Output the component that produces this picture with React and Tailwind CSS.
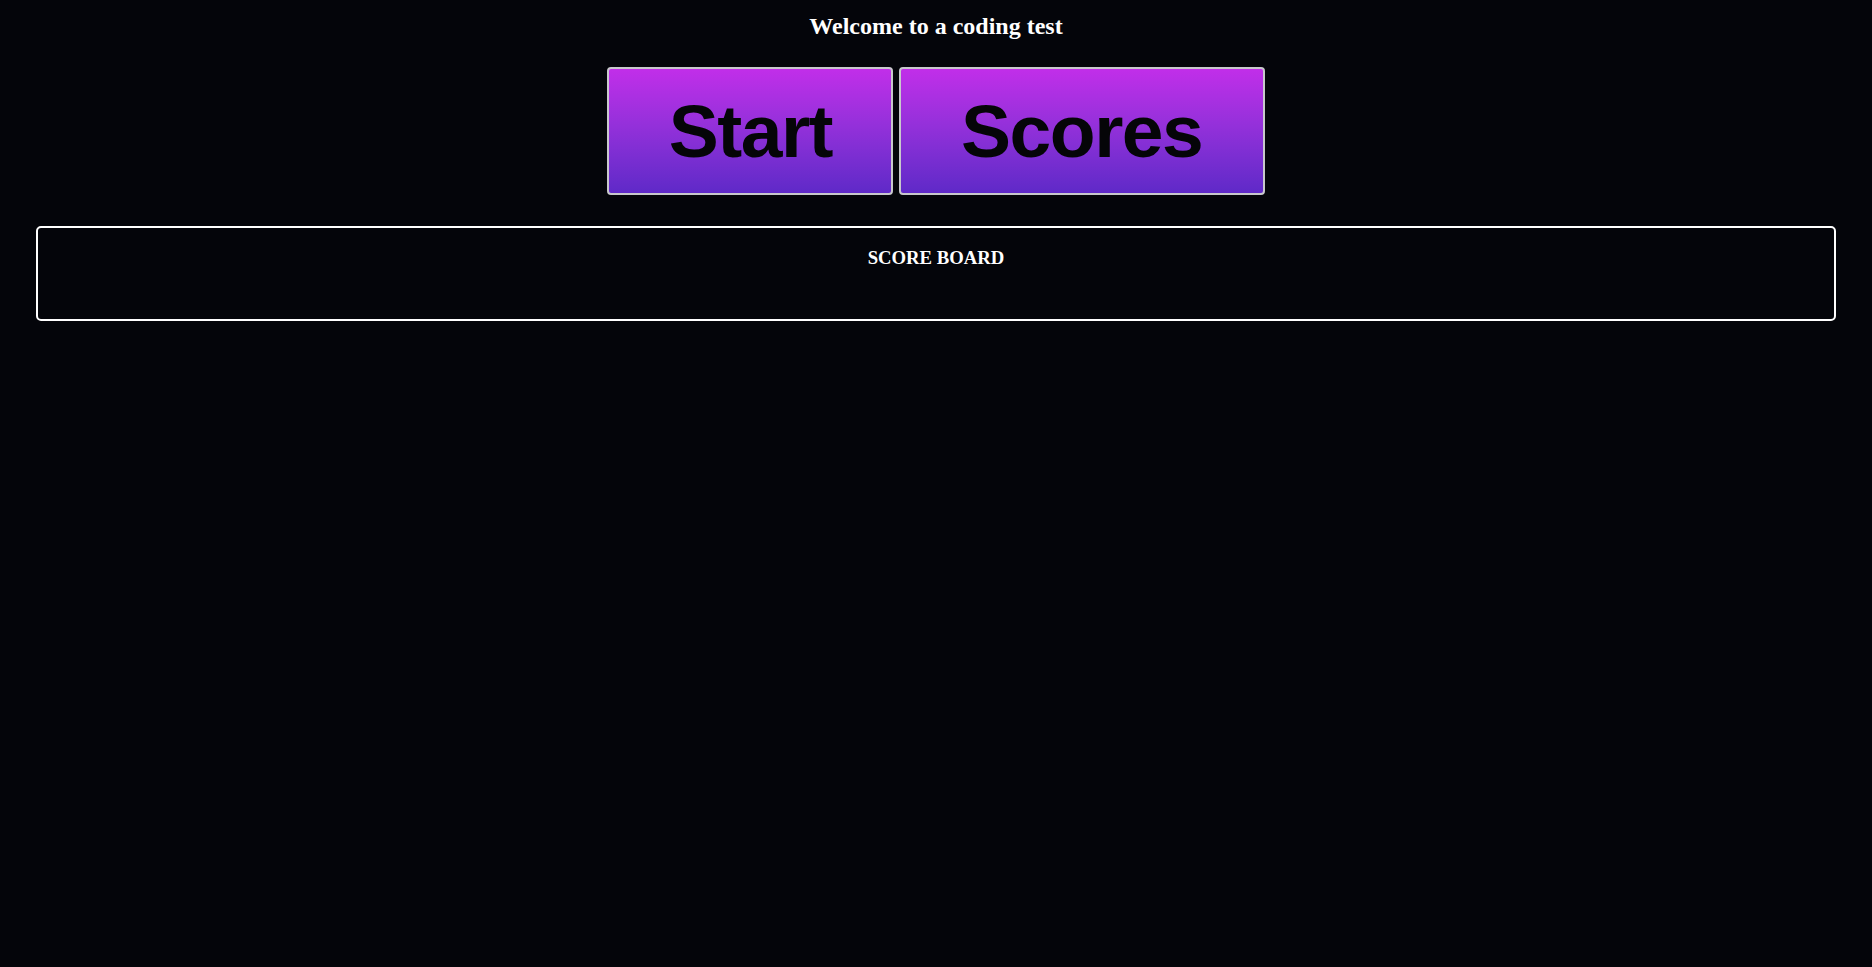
export default function App() {
  return (
    <div className="min-h-[967px] bg-[#04050a] pt-[12px] text-white">
      {/* Titre */}
      <h2 className="m-0 text-center text-[24px] leading-[28px] font-bold font-['Liberation_Serif',serif]">
        Welcome to a coding test
      </h2>

      {/* Boutons */}
      <div className="mt-[27px] flex justify-center gap-[6px]">
        <button className="flex h-[128px] items-center rounded-[4px] border-2 border-[#c8c8cc] bg-gradient-to-b from-[#c12ee9] to-[#5f29c8] pl-[60px] pr-[59px] text-[75px] leading-none font-bold tracking-[-1.5px] text-[#050508] font-['Liberation_Sans',Arial,sans-serif]">
          Start
        </button>
        <button className="flex h-[128px] items-center rounded-[4px] border-2 border-[#c8c8cc] bg-gradient-to-b from-[#c12ee9] to-[#5f29c8] pl-[60px] pr-[61px] text-[75px] leading-none font-bold tracking-[-1.5px] text-[#050508] font-['Liberation_Sans',Arial,sans-serif]">
          Scores
        </button>
      </div>

      {/* Tableau des scores */}
      <div className="mx-[36px] mt-[31px] h-[95px] rounded-[5px] border-2 border-white">
        <h3 className="mt-[19px] text-center text-[18.72px] leading-[22px] font-bold font-['Liberation_Serif',serif]">
          SCORE BOARD
        </h3>
      </div>
    </div>
  );
}
